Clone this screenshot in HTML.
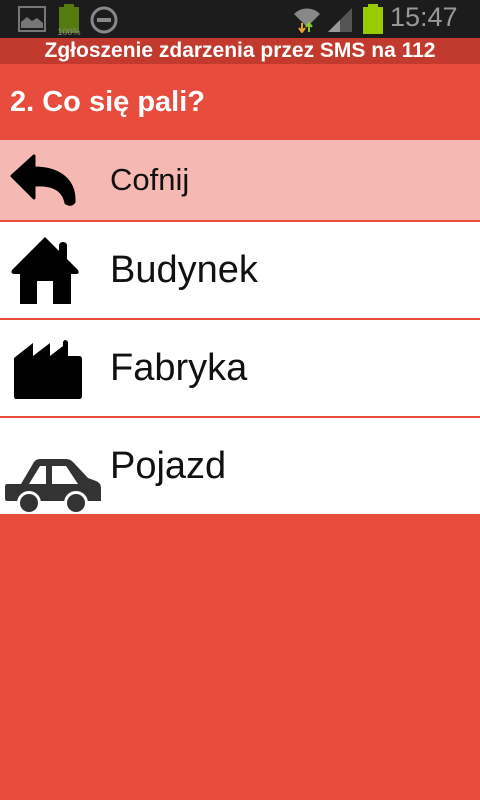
<!DOCTYPE html>
<html><head><meta charset="utf-8"><style>
body{margin:0;width:480px;height:800px;background:#e84c3d;font-family:"Liberation Sans",sans-serif;overflow:hidden;position:relative}
.sb{position:absolute;top:0;left:0;width:480px;height:38px;background:#1c1c1c}
.tb{position:absolute;top:38px;left:0;width:480px;height:26px;background:#c23a2e;color:#fff;font-weight:bold;font-size:21px;text-align:center;line-height:26px;white-space:nowrap}
.hd{position:absolute;top:64px;left:0;width:480px;height:76px;color:#fff;font-weight:bold;font-size:29px;line-height:76px;padding-left:10px;box-sizing:border-box}
.row{position:absolute;left:0;width:480px;background:#fff}
.row span{position:absolute;left:110px;color:#111}
svg{position:absolute}
</style></head><body>
<div class="sb">
<svg style="left:18px;top:6px" width="28" height="26"><rect x="1" y="1" width="26" height="24" fill="none" stroke="#777" stroke-width="2"/><path d="M3 22 L3 16 L9 11 L14 15 L19 12 L25 17 L25 22Z" fill="#777"/></svg>
<svg style="left:57px;top:4px" width="24" height="32"><rect x="7" y="0" width="10" height="4" fill="#557a10"/><rect x="2" y="3" width="20" height="26" fill="#557a10"/><text x="12" y="31" font-size="9" fill="#888" text-anchor="middle" font-family="Liberation Sans">100%</text></svg>
<svg style="left:89px;top:5px" width="30" height="30"><circle cx="15" cy="15" r="12" fill="none" stroke="#888" stroke-width="3"/><rect x="8" y="13" width="14" height="4" fill="#888"/></svg>
<svg style="left:292px;top:5px" width="30" height="28"><path d="M2 9 A18 18 0 0 1 28 9 L15 22Z" fill="#888"/><path d="M10 18 v8 M7 23 l3 4 l3-4" stroke="#f0a030" stroke-width="2" fill="none"/><path d="M17 27 v-8 M14 22 l3-4 l3 4" stroke="#8c3" stroke-width="2" fill="none"/></svg>
<svg style="left:328px;top:5px" width="26" height="28"><path d="M0 27 L24 3 L24 27Z" fill="#555"/><path d="M0 27 L12 15 L12 27Z" fill="#999"/></svg>
<svg style="left:362px;top:4px" width="22" height="30"><rect x="6" y="0" width="10" height="4" fill="#9c0"/><rect x="1" y="3" width="20" height="27" fill="#9c0"/></svg>
<div style="position:absolute;left:390px;top:2px;color:#999;font-size:27px">15:47</div>
</div>
<div class="tb">Zgłoszenie zdarzenia przez SMS na 112</div>
<div class="hd">2. Co się pali?</div>
<div class="row" style="top:140px;height:80px;background:#f5b8b2"><span style="font-size:31px;top:22px">Cofnij</span>
<svg style="left:9px;top:14px" width="68" height="52" viewBox="0 0 68 52"><path d="M25 2 L3 22 L25 44 L25 31 C42 30 54 34 57 49 Q62 52 65 48 C66 26 50 14 25 14Z" fill="#000" stroke="#000" stroke-width="3" stroke-linejoin="round"/></svg></div>
<div class="row" style="top:222px;height:96px"><span style="font-size:38px;top:27px">Budynek</span>
<svg style="left:10px;top:12px" width="72" height="72" viewBox="0 0 72 72"><path d="M35 3 L2 36 Q0 40 5 40 L10 40 L10 70 L27 70 L27 47 L43 47 L43 70 L61 70 L61 40 L66 40 Q70 40 68 36 L57 25 L57 12 Q57 8 53 8 Q49 8 49 12 L49 17 Z" fill="#000"/></svg></div>
<div class="row" style="top:320px;height:96px"><span style="font-size:38px;top:27px">Fabryka</span>
<svg style="left:13px;top:18px" width="70" height="62" viewBox="0 0 70 62"><path d="M1 20 L20 5 L20 18 L37 5 L37 18 L50 8 L50 4 Q52 0 55 4 L55 18 L66 18 Q69 18 69 21 L69 58 Q69 61 66 61 L3 61 Q1 61 1 58Z" fill="#000"/></svg></div>
<div class="row" style="top:418px;height:96px"><span style="font-size:38px;top:27px">Pojazd</span>
<svg style="left:4px;top:38px" width="98" height="58" viewBox="0 0 98 58"><path d="M3 28 L17 28 L30 6 Q32 3 36 3 L62 3 Q66 3 69 6 L84 22 L92 25 Q97 27 97 32 L97 45 L3 45 Q1 45 1 42 L1 31 Q1 28 3 28Z" fill="#333"/><path d="M25 28 L36 10 L42 10 L42 28Z M48 10 L62 10 L74 28 L48 28Z" fill="#fff"/><circle cx="25" cy="47" r="12" fill="#fff"/><circle cx="25" cy="47" r="9" fill="#333"/><circle cx="72" cy="47" r="12" fill="#fff"/><circle cx="72" cy="47" r="9" fill="#333"/></svg></div>
</body></html>
